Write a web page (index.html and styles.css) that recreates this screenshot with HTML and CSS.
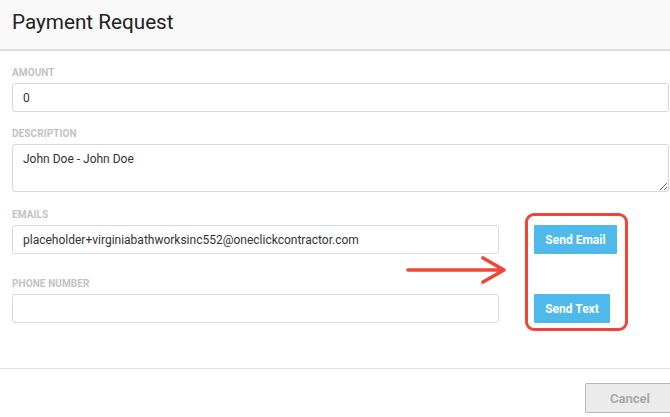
FILE: index.html
```html
<!DOCTYPE html>
<html lang="en">
<head>
<meta charset="utf-8">
<title>Payment Request</title>
<link rel="stylesheet" href="styles.css">
</head>
<body>
<div class="modal">
  <header class="modal-header">
    <h1 class="modal-title">Payment Request</h1>
  </header>
  <div class="modal-body">
    <div class="field">
      <label class="field-label">AMOUNT</label>
      <input class="field-input" type="text" value="0">
    </div>
    <div class="field">
      <label class="field-label">DESCRIPTION</label>
      <textarea class="field-input field-textarea">John Doe - John Doe</textarea>
    </div>
    <div class="send-grid">
      <div class="field row-email">
        <label class="field-label">EMAILS</label>
        <input class="field-input" type="text" value="placeholder+virginiabathworksinc552@oneclickcontractor.com">
      </div>
      <button class="btn-send btn-email">Send Email</button>
      <div class="field row-phone">
        <label class="field-label">PHONE NUMBER</label>
        <input class="field-input" type="text" value="">
      </div>
      <button class="btn-send btn-text">Send Text</button>
      <svg class="annot-arrow" width="102" height="30" viewBox="0 0 102 30">
        <path d="M2 15 H97 M77 3 L98 15 L77 27" fill="none" stroke="#f1453a" stroke-width="3.6" stroke-linecap="round" stroke-linejoin="round"/>
      </svg>
      <div class="annot-box"></div>
    </div>
  </div>
  <footer class="modal-footer">
    <button class="btn-cancel">Cancel</button>
  </footer>
</div>
</body>
</html>
```

FILE: styles.css
```css
* { box-sizing: border-box; }
html, body {
  margin: 0;
  padding: 0;
  background: #ffffff;
  overflow: hidden;
}
body {
  font-family: Roboto, "Liberation Sans", Arial, sans-serif;
  color: #333;
  width: 670px;
  height: 417px;
}
.modal-header {
  height: 51px;
  background: #f9f9f9;
  border-bottom: 2px solid #dcdcdc;
  padding: 10px 12px 0;
}
.modal-title {
  margin: 0;
  font-size: 20.7px;
  line-height: 24px;
  font-weight: 400;
  color: #222;
}
.modal-body {
  padding: 15px 1px 45px 12px;
}
.field {
  display: flex;
  flex-direction: column;
  margin-bottom: 15px;
}
.field-label {
  font-size: 10px;
  line-height: 14px;
  font-weight: 700;
  color: #c2c2c2;
  margin-bottom: 3px;
  letter-spacing: 0.1px;
}
.field-input {
  height: 29px;
  border: 1px solid #d9d9d9;
  border-radius: 3px;
  padding: 0 10px;
  font-family: Roboto, "Liberation Sans", Arial, sans-serif;
  font-size: 12px;
  color: #333;
  background: #fff;
  outline: none;
}
.field-textarea {
  height: 48px;
  padding: 6px 10px;
  line-height: 17px;
  resize: vertical;
  margin: 0;
}
.send-grid {
  position: relative;
  display: grid;
  grid-template-columns: 487px auto;
  column-gap: 35px;
  justify-content: start;
  align-items: end;
}
.send-grid .field { margin-bottom: 0; }
.row-email { grid-column: 1; grid-row: 1; margin-top: 1px; }
.btn-email { grid-column: 2; grid-row: 1; }
.row-phone { grid-column: 1; grid-row: 2; margin-top: 23px; }
.btn-text { grid-column: 2; grid-row: 2; justify-self: start; }
.btn-send {
  height: 29px;
  border: none;
  border-radius: 1px;
  background: #4fb9ec;
  color: #fff;
  font-family: Roboto, "Liberation Sans", Arial, sans-serif;
  font-size: 12px;
  font-weight: 700;
  padding: 0 11px;
}
.btn-email { width: 83px; }
.btn-text { width: 76px; }
.annot-arrow {
  position: absolute;
  left: 394px;
  top: 48px;
}
.annot-box {
  position: absolute;
  left: 513px;
  top: 6px;
  width: 103px;
  height: 118px;
  border: 3px solid #f1453a;
  border-radius: 9px;
}
.modal-footer {
  border-top: 1px solid #e3e3e3;
  padding: 14px 0 0 585px;
}
.btn-cancel {
  width: 100px;
  height: 30px;
  background: #ebebeb;
  border: 1px solid #b9b9b9;
  border-radius: 1px;
  color: #a9a9a9;
  font-family: Roboto, "Liberation Sans", Arial, sans-serif;
  font-size: 13px;
  font-weight: 700;
  text-align: left;
  padding: 0 0 0 24px;
}
```
